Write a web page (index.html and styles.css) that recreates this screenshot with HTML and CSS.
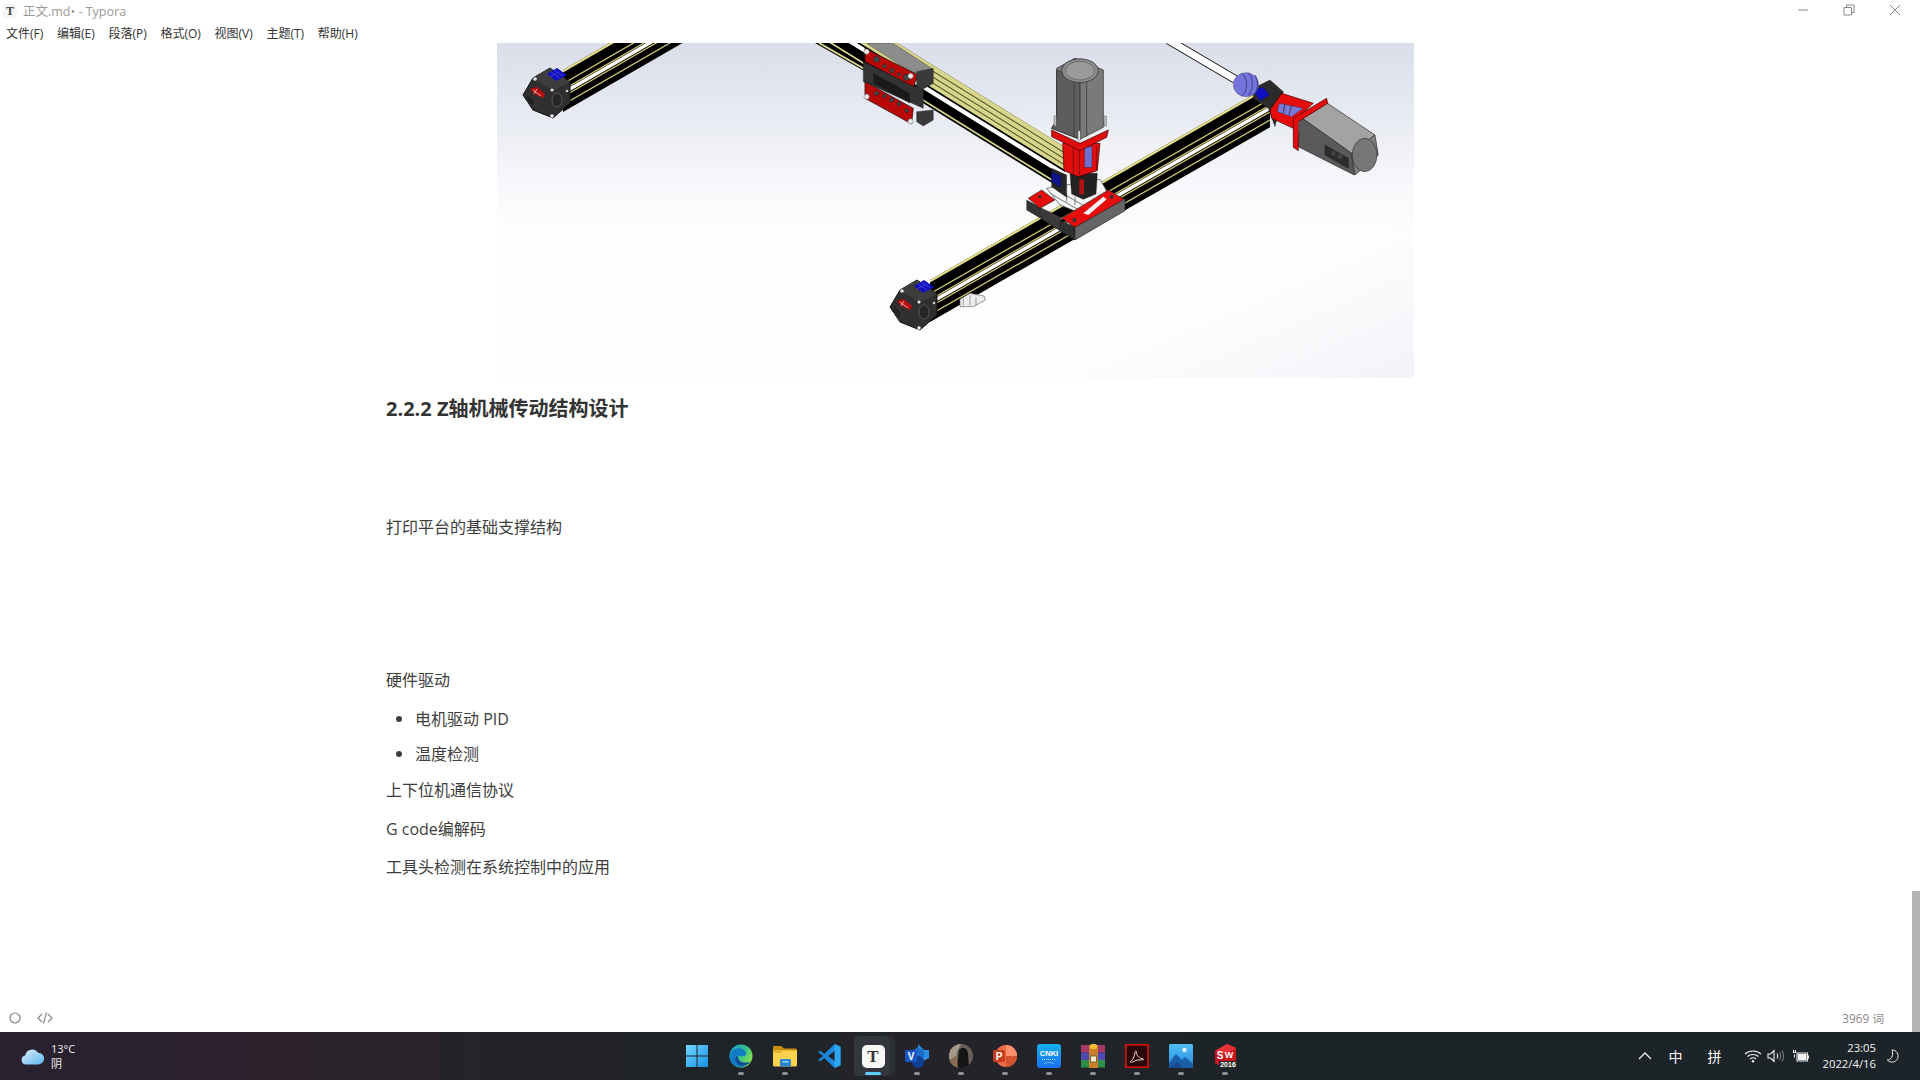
FILE: index.html
```html
<!DOCTYPE html>
<html lang="zh-CN">
<head>
    <meta charset="UTF-8">
    <title>正文.md• - Typora</title>
    <link rel="stylesheet" href="styles.css">
</head>
<body>
<div class="app">
    <header class="titlebar">
        <div class="app-badge">T</div>
        <div class="app-title">正文.md• - Typora</div>
        <div class="win-controls">
            <svg class="win-btn" viewBox="0 0 12 12"><path d="M1 6h10"/></svg>
            <svg class="win-btn" viewBox="0 0 12 12"><path d="M1 3.500h7.500v7.500h-7.500zM3.500 3.500v-2.500h7.500v7.500h-3"/></svg>
            <svg class="win-btn" viewBox="0 0 12 12"><path d="M1 1l10 10M11 1l-10 10"/></svg>
        </div>
    </header>

    <nav class="menubar">
        <span>文件(F)</span>
        <span>编辑(E)</span>
        <span>段落(P)</span>
        <span>格式(O)</span>
        <span>视图(V)</span>
        <span>主题(T)</span>
        <span>帮助(H)</span>
    </nav>

    <main class="editor">
        <article class="write">
            <figure class="figure">
                <svg class="cad" viewBox="0 0 917 335">
                    <defs>
                        <g id="rail-stripes">
                            <rect x="0" y="0" width="340" height="42" fill="#000"/>
                            <rect x="0" y="0" width="340" height="2.500" fill="#e4e08a"/>
                            <rect x="0" y="13" width="340" height="1.500" fill="#c9c56e"/>
                            <rect x="0" y="19" width="340" height="1.500" fill="#c9c56e"/>
                            <rect x="0" y="21" width="340" height="4" fill="#fff"/>
                            <rect x="0" y="26" width="340" height="1.500" fill="#c9c56e"/>
                            <rect x="0" y="34" width="340" height="1.500" fill="#c9c56e"/>
                        </g>
                        <g id="end-block">
                            <polygon points="26,52 36,35 53,25 73,39 73,60 56,75 36,67" fill="#2f2f2f" stroke="#111"/>
                            <polygon points="36,35 53,25 73,39 56,48" fill="#3d3d3d"/>
                            <polygon points="50,31 60,25 70,32 59,38" fill="#1010c0"/>
                            <path d="M54 29l9 6M57 27l9 6M53 34l9-5" stroke="#4a4ae0" stroke-width=".7"/>
                            <polygon points="33,46 40,44 48,51 46,55 37,51" fill="#b80d0d"/>
                            <path d="M36 47l8 6M40 46l-3 5" stroke="#eee" stroke-width=".7"/>
                            <path d="M28 56l8 8 2-6-6-6" fill="#222" stroke="#444" stroke-width=".6"/>
                            <ellipse cx="60" cy="57" rx="5" ry="7" fill="#262626" stroke="#555"/>
                            <circle cx="55" cy="73" r="1.800" fill="#eee"/>
                            <circle cx="38" cy="36" r="1.800" fill="#eee"/>
                            <circle cx="55" cy="47" r="1.500" fill="#eee"/>
                            <circle cx="70" cy="48" r="1.300" fill="#ccc"/>
                        </g>
                    </defs>

                    <!-- rails -->
                    <use href="#rail-stripes" transform="translate(66 27) skewY(-30)"/>
                    <polygon points="318,0 385,38 385,0" fill="#000"/>
                    <path d="M322 0l63 36" stroke="#d8d68a" stroke-width="2"/>
                    <g transform="translate(463 39) skewY(31.800)">
                        <rect x="-160" y="0" width="265" height="44" fill="#000"/>
                        <rect x="-160" y="0" width="265" height="23" fill="#d8d68a"/>
                        <path d="M-160 6h265M-160 12h265M-160 18h265" stroke="#55542a" stroke-width="1.200"/>
                        <rect x="-160" y="25" width="265" height="5" fill="#fff"/>
                        <rect x="-160" y="40" width="265" height="2" fill="#d8d68a"/>
                    </g>
                    <use href="#rail-stripes" transform="translate(433 237) skewY(-29.800)"/>

                    <use href="#end-block"/>
                    <use href="#end-block" transform="translate(367 212)"/>

                    <!-- x carriage, coordinates taken from the upper crop -->
                    <g transform="translate(-7 -3) scale(.3333)">
                        <polygon points="1130,10 1210,10 1325,85 1285,110" fill="#8c8c8c" stroke="#222"/>
                        <polygon points="1120,65 1300,150 1300,205 1120,125" fill="#333" stroke="#111"/>
                        <polygon points="1125,25 1285,105 1270,140 1125,65" fill="#b80808" stroke="#111" stroke-width="2"/>
                        <polygon points="1125,125 1270,205 1265,252 1125,175" fill="#b80808" stroke="#111" stroke-width="2"/>
                        <polygon points="1280,95 1330,85 1330,130 1295,150 1280,140" fill="#3a3a3a" stroke="#111"/>
                        <polygon points="1280,215 1330,210 1330,240 1300,258 1280,245" fill="#3a3a3a" stroke="#111"/>
                        <polygon points="1150,100 1260,160 1260,190 1150,130" fill="#1a1a1a"/>
                        <g fill="#444" stroke="#111">
                            <circle cx="1160" cy="58" r="9"/><circle cx="1183" cy="78" r="6"/><circle cx="1205" cy="92" r="7"/>
                            <circle cx="1227" cy="103" r="5"/><circle cx="1250" cy="112" r="10"/>
                            <circle cx="1160" cy="160" r="7"/><circle cx="1183" cy="168" r="6"/><circle cx="1205" cy="180" r="7"/>
                            <circle cx="1227" cy="192" r="6"/><circle cx="1250" cy="212" r="6"/>
                        </g>
                        <g fill="#e8e8e8" stroke="#333">
                            <circle cx="1130" cy="35" r="8"/><circle cx="1262" cy="108" r="8"/>
                            <circle cx="1130" cy="170" r="8"/><circle cx="1262" cy="244" r="8"/>
                        </g>
                    </g>

                    <!-- z axis and x drive, coordinates taken from the right crop -->
                    <g transform="translate(463 -3) scale(.3333)">
                        <!-- bracket on the rail -->
                        <polygon points="0,778 30,760 72,768 76,780 40,800 0,800" fill="#eee" stroke="#666" stroke-width="2"/>
                        <path d="M10 775v22M30 765v32M48 772v26" stroke="#777" stroke-width="2"/>

                        <!-- carriage -->
                        <polygon points="260,445 420,418 450,470 375,525 300,495" fill="#f4f4f4" stroke="#444" stroke-width="2"/>
                        <path d="M270 460l95 55M290 450l90 52M320 460v25M345 470v25" stroke="#777" stroke-width="3"/>
                        <polygon points="200,480 245,505 245,537 200,510" fill="#333" stroke="#111"/>
                        <polygon points="245,505 300,530 300,572 245,537" fill="#3a3a3a" stroke="#111"/>
                        <polygon points="300,540 345,562 345,600 300,572" fill="#2f2f2f" stroke="#111"/>
                        <polygon points="345,560 495,475 495,512 345,600" fill="#666" stroke="#222" stroke-width="2"/>
                        <polygon points="205,475 245,450 285,480 240,505" fill="#e60d0d" stroke="#222" stroke-width="2"/>
                        <polygon points="305,535 445,450 492,478 345,562" fill="#e60d0d" stroke="#222" stroke-width="2"/>
                        <circle cx="343" cy="540" r="6" fill="#333"/><circle cx="455" cy="470" r="6" fill="#333"/><circle cx="240" cy="470" r="5" fill="#333"/>
                        <polygon points="370,520 430,470 440,478 385,525" fill="#f4f4f4"/>

                        <!-- z motor -->
                        <polygon points="275,385 320,405 320,472 275,440" fill="#262626" stroke="#111"/>
                        <polygon points="275,395 302,408 302,442 275,425" fill="#0d168c" stroke="#0a0a50"/>
                        <polygon points="330,400 412,400 408,462 370,478 335,462" fill="#222" stroke="#000"/>
                        <rect x="358" y="418" width="14" height="45" fill="#b51414"/>
                        <polygon points="308,310 420,310 412,392 355,410 312,392" fill="#e00d0d" stroke="#300" stroke-width="2"/>
                        <rect x="374" y="320" width="22" height="62" fill="#6a6fd0" stroke="#224"/>
                        <path d="M340 325v75M358 325v80M410 320v70" stroke="#501010" stroke-width="2"/>
                        <polygon points="290,85 345,55 430,90 430,262 360,298 275,265 290,240" fill="#7a7a7a" stroke="#222" stroke-width="2"/>
                        <polygon points="290,90 360,120 360,298 275,265 290,240" fill="#5d5d5d" stroke="#222" stroke-width="2"/>
                        <ellipse cx="360" cy="92" rx="55" ry="36" fill="#8d8d8d" stroke="#222" stroke-width="2"/>
                        <ellipse cx="360" cy="92" rx="44" ry="28" fill="#9a9a9a" stroke="#555" stroke-width="2"/>
                        <path d="M342 125v170M380 125v165" stroke="#333" stroke-width="2"/>
                        <polygon points="275,270 360,310 445,270 440,292 360,332 275,290" fill="#e00d0d" stroke="#300" stroke-width="2"/>
                        <rect x="282" y="228" width="7" height="30" fill="#bbb" stroke="#333"/>
                        <rect x="432" y="228" width="7" height="30" fill="#bbb" stroke="#333"/>
                        <rect x="354" y="272" width="7" height="30" fill="#ddd" stroke="#333"/>

                        <!-- lead screw -->
                        <path d="M625 0L825 118" stroke="#111" stroke-width="26"/>
                        <path d="M625 0L825 118" stroke="#fff" stroke-width="21"/>

                        <!-- x drive -->
                        <polygon points="880,145 930,120 970,155 945,260 925,205 880,175" fill="#2b2b2b" stroke="#111"/>
                        <polygon points="880,150 910,142 928,165 900,182" fill="#1010c0" stroke="#0a0a60"/>
                        <ellipse cx="858" cy="134" rx="38" ry="36" fill="#7474dc" stroke="#333"/>
                        <path d="M845 100c20 15 20 55 0 68M865 98c16 18 16 52 0 68M885 105c10 15 10 40 0 55" fill="none" stroke="#3a3a88" stroke-width="3"/>
                        <polygon points="930,210 965,160 1060,190 1005,240 1000,265 935,235" fill="#e80d0d" stroke="#300" stroke-width="2"/>
                        <polygon points="958,190 1030,205 995,230 952,215" fill="#7a7ad8" stroke="#223"/>
                        <path d="M975 190l-5 30M995 195l-8 30" stroke="#335" stroke-width="3"/>
                        <polygon points="1020,230 1095,185 1245,285 1175,340" fill="#a3a3a3" stroke="#222" stroke-width="2"/>
                        <polygon points="1020,230 1175,340 1183,405 1015,320" fill="#5a5a5a" stroke="#222" stroke-width="2"/>
                        <polygon points="1000,235 1100,175 1103,190 1015,245 1015,332 1000,322" fill="#e80d0d" stroke="#300" stroke-width="2"/>
                        <polygon points="1095,315 1165,355 1165,385 1095,345" fill="#2d2d2d" stroke="#111"/>
                        <circle cx="1120" cy="340" r="7" fill="#444"/><circle cx="1140" cy="350" r="7" fill="#444"/>
                        <polygon points="1175,340 1245,285 1255,345 1185,405" fill="#808080" stroke="#222" stroke-width="2"/>
                        <ellipse cx="1214" cy="345" rx="37" ry="50" fill="#777" stroke="#333" stroke-width="2"/>
                    </g>
                </svg>
            </figure>

            <h3 class="heading">2.2.2 Z轴机械传动结构设计</h3>
            <p><br></p>
            <p>打印平台的基础支撑结构</p>
            <p><br></p>
            <p><br></p>
            <p><br></p>
            <p>硬件驱动</p>
            <ul class="list">
                <li>电机驱动 PID</li>
                <li>温度检测</li>
            </ul>
            <p>上下位机通信协议</p>
            <p>G code编解码</p>
            <p>工具头检测在系统控制中的应用</p>
        </article>
    </main>

    <footer class="statusbar">
        <svg class="status-icon" viewBox="0 0 14 14"><circle cx="7" cy="7" r="5"/></svg>
        <svg class="status-icon code-icon" viewBox="0 0 16 14"><path d="M5 3L1 7l4 4M11 3l4 4-4 4M9.500 1.500l-3 11"/></svg>
        <span class="word-count">3969 词</span>
    </footer>

    <div class="scroll-thumb"></div>

    <div class="taskbar">
        <div class="weather">
            <svg class="weather-icon" viewBox="0 0 24 20">
                <defs>
                    <linearGradient id="cloud" x1="0" y1="0" x2="1" y2="1"><stop offset="0" stop-color="#d8f0ff"/><stop offset="1" stop-color="#5fb4ee"/></linearGradient>
                </defs>
                <path d="M6 18.500a4.500 4.500 0 0 1-.800-8.900A7 7 0 0 1 18 6.800a5.800 5.800 0 0 1 .500 11.700z" fill="url(#cloud)"/>
            </svg>
            <div class="weather-text">
                <span>13°C</span>
                <span>阴</span>
            </div>
        </div>

        <div class="task-icons">
            <div class="task-item">
                <svg class="task-icon" viewBox="0 0 24 24">
                    <defs>
                        <linearGradient id="win" x1="0" y1="0" x2="1" y2="1"><stop offset="0" stop-color="#74d6ff"/><stop offset="1" stop-color="#1493e8"/></linearGradient>
                    </defs>
                    <path d="M1 1h10.500v10.500H1zM12.500 1H23v10.500H12.500zM1 12.500h10.500V23H1zM12.500 12.500H23V23H12.500z" fill="url(#win)"/>
                </svg>
            </div>
            <div class="task-item">
                <svg class="task-icon" viewBox="0 0 24 24">
                    <defs>
                        <linearGradient id="edge" x1="0" y1="0" x2="1" y2=".6"><stop offset="0" stop-color="#1aa0d8"/><stop offset=".6" stop-color="#34c08c"/><stop offset="1" stop-color="#8ae04a"/></linearGradient>
                    </defs>
                    <circle cx="12" cy="12" r="11.500" fill="url(#edge)"/>
                    <path d="M.5 12C2 4 12 2 16 7c2 2.500 1 5-1.500 5H9c-1 4 3 7.500 9 6.500 1 0 2-.5 3-1-2 3.500-5.500 5.500-9.500 5.500C5 23 .5 18 .5 12z" fill="#0f7cc4"/>
                    <path d="M9 12c-1 4 3 7.500 9 6.500 1 0 2-.5 3-1-2 3-5 4-8 4-4 0-7-3.500-6.500-7 .3-1.500 1-2.500 2.500-2.500z" fill="#17488f"/>
                </svg>
                <span class="run-dot"></span>
            </div>
            <div class="task-item">
                <svg class="task-icon" viewBox="0 0 24 24">
                    <path d="M0 3.500C0 2.700.7 2 1.500 2h7l2.500 2.500h11.500c.8 0 1.500.7 1.500 1.500v3H0z" fill="#c98f12"/>
                    <path d="M0 6.500h24V21c0 .8-.7 1.500-1.500 1.500h-21C.7 22.500 0 21.800 0 21z" fill="#fcd24f"/>
                    <path d="M10.500 6.500L8 9H0V6.500z" fill="#e8b32e"/>
                    <rect x="7" y="15" width="11" height="7.500" rx="1" fill="#2a86d0"/>
                    <rect x="9.500" y="17" width="6" height="1.500" fill="#8fd0f8"/>
                </svg>
                <span class="run-dot"></span>
            </div>
            <div class="task-item">
                <svg class="task-icon" viewBox="0 0 24 24">
                    <path d="M17.500 0L7.300 10 3 6.700.9 7.800l5.200 4.200L.9 16.200 3 17.300 7.300 14l10.200 10 6-2.800V2.800zM18 17.200L11 12l7-5.200z" fill="#1a8ad8"/>
                    <path d="M17.500 0l6 2.800v18.400l-6 2.800z" fill="#2ba6ee"/>
                </svg>
            </div>
            <div class="task-item is-active">
                <div class="typora-icon">T</div>
                <span class="run-dot"></span>
            </div>
            <div class="task-item">
                <svg class="task-icon" viewBox="0 0 24 24">
                    <polygon points="13,0 19,6 24,6 24,14 18,17 13,11" fill="#2a8fe0"/>
                    <polygon points="13,3 19,7 19,14 13,18 7,14 7,7" fill="#1f6cc8"/>
                    <circle cx="13" cy="18" r="6" fill="#103f94"/>
                    <rect x="0" y="6" width="12" height="12" rx="1" fill="#1957c0"/>
                    <text class="icon-label" x="6" y="15.500" font-size="10" fill="#fff" text-anchor="middle">V</text>
                </svg>
                <span class="run-dot"></span>
            </div>
            <div class="task-item">
                <svg class="task-icon" viewBox="0 0 24 24">
                    <defs>
                        <clipPath id="photo-clip"><circle cx="12" cy="12" r="12"/></clipPath>
                    </defs>
                    <g clip-path="url(#photo-clip)">
                        <rect width="24" height="24" fill="#6b6058"/>
                        <path d="M0 0h12L8 8 6 24H0z" fill="#a59a8a"/>
                        <path d="M10 6c4-4 8-2 9 3l1 15H8z" fill="#151516"/>
                        <path d="M0 16l7-4 2 12H0z" fill="#8a6a50"/>
                    </g>
                </svg>
                <span class="run-dot"></span>
            </div>
            <div class="task-item">
                <svg class="task-icon" viewBox="0 0 24 24">
                    <circle cx="13" cy="12" r="11" fill="#ed6c47"/>
                    <path d="M13 1a11 11 0 0 1 11 11H13z" fill="#ff8f6b"/>
                    <path d="M13 12h11a11 11 0 0 1-11 11z" fill="#d35230"/>
                    <rect x="0" y="6" width="12" height="12" rx="1" fill="#c43e1c"/>
                    <text class="icon-label" x="6" y="15.500" font-size="10" fill="#fff" text-anchor="middle">P</text>
                </svg>
                <span class="run-dot"></span>
            </div>
            <div class="task-item">
                <svg class="task-icon" viewBox="0 0 24 24">
                    <defs>
                        <linearGradient id="cnki" x1="0" y1="0" x2="0" y2="1"><stop offset="0" stop-color="#12b0f0"/><stop offset="1" stop-color="#1a6ff0"/></linearGradient>
                    </defs>
                    <rect width="24" height="24" rx="3" fill="url(#cnki)"/>
                    <text class="icon-label" x="12" y="12" font-size="7.500" fill="#fff" text-anchor="middle">CNKI</text>
                    <path d="M5 15.500h14M7 20c3-2 7-2 10 0" stroke="#bfe6ff" stroke-width="1" stroke-dasharray="1 1" fill="none"/>
                </svg>
                <span class="run-dot"></span>
            </div>
            <div class="task-item">
                <svg class="task-icon" viewBox="0 0 24 24">
                    <rect x="0" y="1" width="24" height="7.500" fill="#a83a6a"/>
                    <rect x="0" y="8.500" width="24" height="7.500" fill="#4a4ab0"/>
                    <rect x="0" y="16" width="24" height="7.500" fill="#2f8f48"/>
                    <rect x="8" y="1" width="9" height="23" fill="#c8802a"/>
                    <rect x="9" y="0" width="7" height="5" rx="2" fill="#f0c030"/>
                    <rect x="9.500" y="12" width="6" height="6" fill="#f4ead0" stroke="#553" stroke-width=".8"/>
                </svg>
                <span class="run-dot"></span>
            </div>
            <div class="task-item">
                <svg class="task-icon" viewBox="0 0 24 24">
                    <rect x=".8" y=".8" width="22.400" height="22.400" fill="#2a0808" stroke="#d5140e" stroke-width="1.600"/>
                    <path d="M5.500 17.500c2-1 4-5 4.500-9 .2-2 1.500-2 1.500 0 0 3 3 6 6.500 6.300 1 .2.500 1.200-.5 1-3-.2-7 .5-9 1.700-1.700 1-3.500 1-3 0z" fill="none" stroke="#e8e0e0" stroke-width="1"/>
                </svg>
                <span class="run-dot"></span>
            </div>
            <div class="task-item">
                <svg class="task-icon" viewBox="0 0 24 24">
                    <defs>
                        <linearGradient id="photos" x1="0" y1="0" x2="0" y2="1"><stop offset="0" stop-color="#4fc0f5"/><stop offset="1" stop-color="#2a88dc"/></linearGradient>
                    </defs>
                    <rect width="24" height="24" rx="1.500" fill="url(#photos)"/>
                    <circle cx="15.500" cy="6" r="2.200" fill="#e6f6ff"/>
                    <path d="M0 19l7-9 6 6 3-3 8 7v4H0z" fill="#1a5ea8"/>
                    <path d="M0 24l8-6 6 6z" fill="#174a90"/>
                </svg>
                <span class="run-dot"></span>
            </div>
            <div class="task-item">
                <svg class="task-icon" viewBox="0 0 24 24">
                    <polygon points="2,7 14,0 23,4 23,17 11,24 2,19" fill="#c8141e"/>
                    <polygon points="14,0 23,4 12,10 2,7" fill="#e8323a"/>
                    <text class="icon-label" x="7" y="15" font-size="10" fill="#fff" text-anchor="middle">S</text>
                    <text class="icon-label" x="16" y="14" font-size="9" fill="#fff" text-anchor="middle">W</text>
                    <rect x="6" y="17" width="18" height="7" fill="#2a2a2a"/>
                    <text class="icon-label" x="15" y="23" font-size="7" fill="#fff" text-anchor="middle">2016</text>
                </svg>
                <span class="run-dot"></span>
            </div>
        </div>

        <div class="tray">
            <svg class="tray-caret" viewBox="0 0 14 8"><path d="M1 7l6-6 6 6"/></svg>
            <span class="tray-ime">中</span>
            <span class="tray-ime">拼</span>
            <svg class="tray-icon tray-wifi" viewBox="0 0 18 14"><path d="M1 5c4.500-4 11.500-4 16 0M3.500 7.500c3-2.600 8-2.600 11 0M6 10c1.700-1.400 4.300-1.400 6 0"/><circle cx="9" cy="12.300" r="1.200"/></svg>
            <svg class="tray-icon tray-sound" viewBox="0 0 18 14"><path d="M1 5h2.500L7 1.500v11L3.500 9H1zM10 4.500c1 1.500 1 3.500 0 5"/><path class="is-dim" d="M12.500 3c1.500 2.500 1.500 5.500 0 8M15 1.500c2 3.300 2 7.700 0 11"/></svg>
            <svg class="tray-icon tray-battery" viewBox="0 0 18 14"><path d="M5 4h10.500v8H5z"/><rect x="6.500" y="5.500" width="7.500" height="5" class="is-solid"/><path d="M16.500 6.500v3M1 3.500h3M1.500 1v2.500M3.500 1v2.500M2.500 5.500v3"/></svg>
            <div class="clock">
                <span>23:05</span>
                <span>2022/4/16</span>
            </div>
            <svg class="tray-moon" viewBox="0 0 16 16"><path d="M7 1a7 7 0 1 1-5.500 11.500C5.500 12.500 9 8 7 1z"/></svg>
        </div>
    </div>
</div>
</body>
</html>
```

FILE: styles.css
```css
html, body {
    margin: 0;
    height: 100%;
    overflow: hidden;
}
body {
    font-family: "Open Sans", "Noto Sans CJK SC", sans-serif;
    color: #333;
    background: #fff;
}
.app {
    display: flex;
    flex-direction: column;
    height: 1080px;
    position: relative;
}

/* title and menu */
.titlebar {
    display: flex;
    align-items: center;
    height: 21px;
    flex: none;
}
.app-badge {
    width: 14px;
    height: 14px;
    margin-left: 3px;
    border-radius: 3px;
    background: #f6f6f6;
    color: #444;
    font: bold 12px/14px "Liberation Serif", serif;
    text-align: center;
}
.app-title {
    margin-left: 6px;
    font-size: 12.500px;
    color: #9a9a9a;
}
.win-controls {
    display: flex;
    gap: 34px;
    margin-left: auto;
    margin-right: 19px;
    margin-bottom: 2px;
}
.win-btn {
    width: 12px;
    height: 12px;
    fill: none;
    stroke: #8a8a8a;
    stroke-width: 1;
}
.menubar {
    display: flex;
    gap: 13.700px;
    height: 22px;
    flex: none;
    padding-left: 6px;
    font-size: 12px;
    line-height: 25px;
    color: #333;
}

/* document */
.editor {
    flex: 1;
    min-height: 0;
    overflow: hidden;
}
.write {
    width: 1139px;
    margin-left: 386px;
    font-size: 16px;
    line-height: 25.600px;
    color: #3d3d3d;
}
.figure {
    width: 917px;
    height: 335px;
    margin: 0 auto;
    background:
        linear-gradient(155deg, transparent 78%, rgba(232, 236, 244, .55)),
        linear-gradient(#dadeea, #e9ebf3 22%, #f7f8fb 42%, #fefefe 58%, #fdfdfd);
}
.cad {
    display: block;
    width: 917px;
    height: 335px;
}
.heading {
    margin: 15.500px 0 53px;
    font-size: 20px;
    line-height: 30px;
    font-weight: 700;
    color: #333;
}
.write p {
    margin: 12.800px 0;
}
.list {
    margin: -1px 0 -2px;
    padding-left: 29px;
}
.list li {
    margin: 8.400px 0;
}
.list li::marker {
    font-size: 18px;
}
.scroll-thumb {
    position: absolute;
    right: 0;
    bottom: 48px;
    width: 8px;
    height: 141px;
    background: #b3b3b3;
}

/* status bar */
.statusbar {
    display: flex;
    align-items: center;
    height: 22px;
    padding-bottom: 7px;
    box-sizing: border-box;
    flex: none;
}
.status-icon {
    width: 14px;
    height: 14px;
    margin-left: 8px;
    fill: none;
    stroke: #888;
    stroke-width: 1.200;
}
.code-icon {
    width: 16px;
    margin-left: 15px;
}
.word-count {
    margin-left: auto;
    margin-right: 36px;
    font-size: 11.800px;
    color: #888;
}

/* taskbar */
.taskbar {
    display: grid;
    grid-template-columns: 1fr auto 1fr;
    align-items: center;
    height: 48px;
    flex: none;
    background: linear-gradient(90deg, #2a2130, #2b222c 16%, #1e2428 38%, #25232a 50%, #1d2428 62%, #1d2429);
    color: #fff;
    font-size: 12px;
}
.weather {
    display: flex;
    align-items: center;
    gap: 7px;
    padding-left: 20px;
}
.weather-icon {
    width: 24px;
    height: 20px;
}
.weather-text {
    display: flex;
    flex-direction: column;
    line-height: 15.500px;
    font-size: 11px;
    color: #eee;
}
.task-icons {
    display: flex;
    justify-content: center;
    padding-left: 2px;
}
.task-item {
    position: relative;
    display: flex;
    align-items: center;
    justify-content: center;
    width: 44px;
    height: 48px;
}
.task-icon {
    width: 24px;
    height: 24px;
}
.icon-label {
    font-family: "Liberation Sans", sans-serif;
    font-weight: 700;
}
.run-dot {
    position: absolute;
    left: 19px;
    bottom: 5px;
    width: 6px;
    height: 3px;
    border-radius: 2px;
    background: #8d9195;
}
.task-item.is-active::before {
    content: "";
    position: absolute;
    left: 5px;
    top: 4px;
    width: 39px;
    height: 40px;
    border-radius: 4px;
    background: #2c2f34;
}
.task-item.is-active::after {
    content: "";
    position: absolute;
    left: 3px;
    top: 4px;
    width: 35px;
    height: 40px;
    border-radius: 4px;
    background: #33363c;
}
.task-item.is-active .run-dot {
    left: 14px;
    width: 16px;
    background: #60cdff;
    z-index: 1;
}
.typora-icon {
    position: relative;
    z-index: 1;
    width: 23px;
    height: 23px;
    border-radius: 5px;
    background: #f8f8f8;
    color: #333;
    font: bold 17px/23px "Liberation Serif", serif;
    text-align: center;
}
.tray {
    display: flex;
    align-items: center;
    justify-content: flex-end;
}
.tray-caret {
    width: 14px;
    height: 8px;
    margin-right: 16px;
    fill: none;
    stroke: #eee;
    stroke-width: 1.300;
}
.tray-ime {
    width: 14px;
    margin-right: 25px;
    font-size: 14px;
    text-align: center;
}
.tray-ime + .tray-ime {
    margin-right: 23px;
}
.tray-icon {
    width: 18px;
    height: 14px;
    margin-right: 3px;
    fill: none;
    stroke: #f2f2f2;
    stroke-width: 1.100;
}
.tray-wifi {
    margin-right: 5px;
}
.tray-sound {
    margin-right: 7px;
}
.tray-wifi circle {
    fill: #f2f2f2;
    stroke: none;
}
.tray-sound .is-dim {
    stroke: #777;
}
.tray-battery .is-solid {
    fill: #f2f2f2;
}
.clock {
    display: flex;
    flex-direction: column;
    align-items: flex-end;
    margin-left: 9px;
    line-height: 16px;
    font-size: 11.300px;
    color: #f2f2f2;
}
.tray-moon {
    width: 14px;
    height: 14px;
    margin: 0 20px 0 10px;
    fill: none;
    stroke: #f2f2f2;
    stroke-width: 1.100;
}
```
